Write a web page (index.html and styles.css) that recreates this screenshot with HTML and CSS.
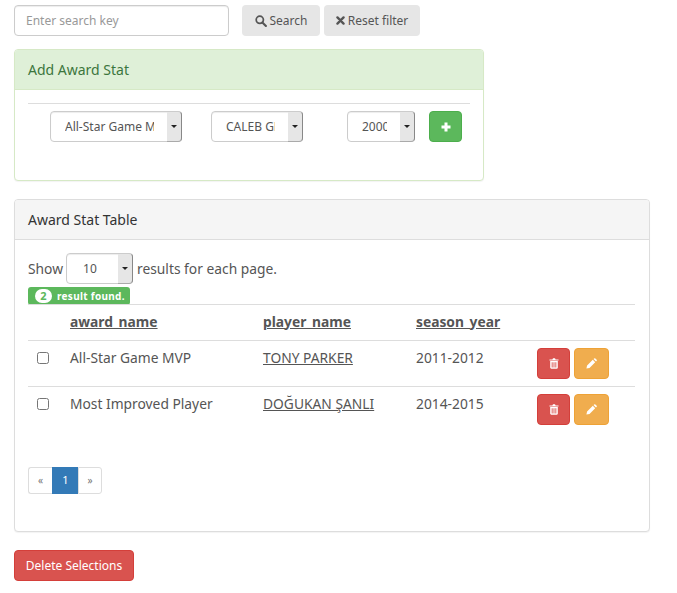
FILE: index.html
```html
<!DOCTYPE html>
<html lang="en">
<head>
<meta charset="utf-8">
<title>Award Stat</title>
<link rel="stylesheet" href="styles.css">
</head>
<body>
<form class="search-row">
  <input class="search-input" type="text" placeholder="Enter search key">
  <button class="btn btn-default search-btn" type="button">
    <svg class="icon" viewBox="0 0 13 13" width="12" height="12"><circle cx="5.2" cy="5.2" r="3.9" fill="none" stroke="currentColor" stroke-width="1.9"/><path d="M8 8l3.800 3.800" stroke="currentColor" stroke-width="2.300" stroke-linecap="round"/></svg><span>Search</span></button>
  <button class="btn btn-default reset-btn" type="button">
    <svg class="icon" viewBox="0 0 10 10" width="9" height="9"><path d="M1.600 1.600l6.800 6.800M8.400 1.600l-6.800 6.800" stroke="currentColor" stroke-width="2.600" stroke-linecap="round"/></svg><span>Reset filter</span></button>
</form>

<section class="panel panel-green">
  <h2 class="panel-heading">Add Award Stat</h2>
  <div class="panel-body add-body">
    <hr class="rule">
    <div class="add-row">
      <div class="select-wrap award-select"><select><option>All-Star Game MVP</option></select><span class="arrow"></span></div>
      <div class="select-wrap player-select"><select><option>CALEB GREEN</option></select><span class="arrow"></span></div>
      <div class="select-wrap year-select"><select><option>2000-2001</option></select><span class="arrow"></span></div>
      <button class="btn btn-success add-btn" type="button" aria-label="Add">
        <svg viewBox="0 0 10 10" width="10" height="10"><path d="M5 .5v9M.5 5h9" stroke="currentColor" stroke-width="3"/></svg>
      </button>
    </div>
  </div>
</section>

<section class="panel panel-gray">
  <h2 class="panel-heading">Award Stat Table</h2>
  <div class="panel-body table-body">
    <div class="show-row">
      <span>Show</span>
      <div class="select-wrap size-select"><select><option>10</option></select><span class="arrow"></span></div>
      <span>results for each page.</span>
    </div>
    <div class="found"><span class="found-count">2</span>result found.</div>
    <table class="stats">
      <thead>
        <tr>
          <th class="col-check"></th>
          <th class="col-award"><a href="#">award_name</a></th>
          <th class="col-player"><a href="#">player_name</a></th>
          <th class="col-season"><a href="#">season_year</a></th>
          <th class="col-actions"></th>
        </tr>
      </thead>
      <tbody>
        <tr>
          <td><input class="check" type="checkbox"></td>
          <td>All-Star Game MVP</td>
          <td><a href="#">TONY PARKER</a></td>
          <td>2011-2012</td>
          <td>
            <div class="actions">
            <button class="btn btn-danger icon-btn" type="button" aria-label="Delete"><svg viewBox="0 0 10 11" width="10" height="11"><path fill-rule="evenodd" d="M3.400 1.400L4 .3h2l.6 1.100H9.500v1.100H.5V1.400zM1.200 3h7.600v6.600c0 .8-.5 1.200-1.100 1.200H2.300c-.6 0-1.100-.4-1.100-1.200zM2.700 4.200v5.400h.9V4.200zM4.550 4.200v5.400h.9V4.200zM6.400 4.200v5.400h.9V4.200z" fill="currentColor"/></svg></button>
            <button class="btn btn-warning icon-btn edit-btn" type="button" aria-label="Edit"><svg viewBox="0 0 11 11" width="11" height="11"><path d="M.4 10.600l.7-3.100 5.700-5.700 2.400 2.400-5.700 5.700zM7.500 1.100l.8-.7c.3-.3.7-.3 1 0l1.400 1.400c.3.3.3.7 0 1l-.7.8z" fill="currentColor"/></svg></button>
            </div>
          </td>
        </tr>
        <tr>
          <td><input class="check" type="checkbox"></td>
          <td>Most Improved Player</td>
          <td><a href="#">DOĞUKAN ŞANLI</a></td>
          <td>2014-2015</td>
          <td>
            <div class="actions">
            <button class="btn btn-danger icon-btn" type="button" aria-label="Delete"><svg viewBox="0 0 10 11" width="10" height="11"><path fill-rule="evenodd" d="M3.400 1.400L4 .3h2l.6 1.100H9.500v1.100H.5V1.400zM1.200 3h7.600v6.600c0 .8-.5 1.200-1.100 1.200H2.300c-.6 0-1.100-.4-1.100-1.200zM2.700 4.200v5.400h.9V4.200zM4.550 4.200v5.400h.9V4.200zM6.400 4.200v5.400h.9V4.200z" fill="currentColor"/></svg></button>
            <button class="btn btn-warning icon-btn edit-btn" type="button" aria-label="Edit"><svg viewBox="0 0 11 11" width="11" height="11"><path d="M.4 10.600l.7-3.100 5.700-5.700 2.400 2.400-5.700 5.700zM7.500 1.100l.8-.7c.3-.3.7-.3 1 0l1.400 1.400c.3.3.3.7 0 1l-.7.8z" fill="currentColor"/></svg></button>
            </div>
          </td>
        </tr>
      </tbody>
    </table>
    <nav class="pagination">
      <a class="page" href="#">«</a><a class="page active" href="#">1</a><a class="page" href="#">»</a>
    </nav>
  </div>
</section>

<button class="btn btn-danger delete-all" type="button">Delete Selections</button>
</body>
</html>
```

FILE: styles.css
```css
* {
  box-sizing: border-box;
}

html,
body {
  margin: 0;
  background: #fff;
}

body {
  padding: 5px 14px 12px;
  font-family: "Noto Sans", "Open Sans", sans-serif;
  font-size: 13px;
  line-height: 20px;
  color: #555;
}

.search-row {
  display: flex;
  height: 31px;
}

.search-input {
  width: 215px;
  height: 31px;
  padding: 0 11px;
  border: 1px solid #ccc;
  border-radius: 4px;
  font: inherit;
  font-size: 12px;
  color: #555;
  box-shadow: inset 0 1px 1px rgba(0, 0, 0, .075);
  outline: none;
}

.search-input::placeholder {
  color: #999;
  opacity: 1;
}

.btn {
  display: inline-flex;
  align-items: center;
  justify-content: center;
  height: 31px;
  padding: 0;
  border: 1px solid transparent;
  border-radius: 4px;
  font: inherit;
  font-size: 12px;
  white-space: nowrap;
  cursor: pointer;
}

.btn-default {
  background: #e6e6e6;
  color: #555;
}

.search-btn {
  width: 78px;
  margin-left: 13px;
}

.reset-btn {
  width: 96px;
  margin-left: 4px;
}

.icon {
  margin-right: 3px;
  flex: none;
}

.panel {
  background: #fff;
  border: 1px solid #ddd;
  border-radius: 4px;
  box-shadow: 0 1px 1px rgba(0, 0, 0, .05);
}

.panel-heading {
  height: 40px;
  margin: 0;
  padding: 9px 13px;
  border-bottom: 1px solid #ddd;
  border-radius: 3px 3px 0 0;
  font-size: 14px;
  font-weight: 400;
  line-height: 21px;
}

.panel-green {
  width: 470px;
  height: 132px;
  margin-top: 13px;
  border-color: #d6e9c6;
}

.panel-green .panel-heading {
  background: #dff0d8;
  border-color: #d6e9c6;
  color: #3c763d;
}

.panel-gray {
  width: 636px;
  height: 333px;
  margin-top: 18px;
}

.panel-gray .panel-heading {
  background: #f5f5f5;
  color: #333;
}

.panel-body {
  padding: 13px 13px 0;
}

.rule {
  height: 1px;
  margin: 0;
  border: 0;
  background: #ddd;
}

.add-row {
  display: flex;
  margin-top: 7px;
  padding-left: 22px;
}

.select-wrap {
  position: relative;
  height: 31px;
  flex: none;
}

.select-wrap select {
  display: block;
  width: 100%;
  height: 31px;
  padding: 0 27px 0 14px;
  border: 1px solid #ccc;
  border-radius: 4px;
  background: #fff;
  font: inherit;
  font-size: 12px;
  color: #555;
  appearance: none;
  -webkit-appearance: none;
  outline: none;
  box-shadow: inset 0 1px 1px rgba(0, 0, 0, .075);
}

.arrow {
  position: absolute;
  top: 0;
  right: 0;
  width: 15px;
  height: 31px;
  background: #e6e6e6;
  border: 1px solid #ccc;
  border-left: 0;
  border-right-color: #888;
  border-bottom-color: #aaa;
  border-radius: 0 4px 4px 0;
}

.arrow::after {
  content: "";
  position: absolute;
  top: 13px;
  left: 4px;
  border: 3px solid transparent;
  border-top-color: #222;
  border-bottom: 0;
}

.award-select {
  width: 132px;
}

.player-select {
  width: 92px;
  margin-left: 29px;
}

.year-select {
  width: 68px;
  margin-left: 44px;
}

.add-btn {
  width: 33px;
  margin-left: 14px;
}

.btn-success {
  background: #5cb85c;
  border-color: #4cae4c;
  color: #fff;
}

.table-body {
  padding-top: 13px;
}

.show-row {
  display: flex;
  align-items: center;
  gap: 4px;
  height: 31px;
  font-size: 13.8px;
}

.size-select {
  width: 67px;
  margin-left: -1px;
}

.size-select select {
  padding-left: 16px;
}

.found {
  display: flex;
  align-items: center;
  width: 102px;
  height: 18px;
  margin-top: 3px;
  padding-left: 7px;
  border-radius: 3px;
  background: #5cb85c;
  color: #fff;
  font-size: 10px;
  font-weight: 700;
  line-height: 18px;
  letter-spacing: .3px;
}

.found-count {
  display: flex;
  align-items: center;
  justify-content: center;
  width: 17px;
  height: 14px;
  margin-right: 5px;
  border-radius: 7px;
  background: #fff;
  color: #5cb85c;
  font-size: 11px;
}

.stats {
  width: 607px;
  margin-top: -1px;
  border-collapse: collapse;
  table-layout: fixed;
  font-size: 13.8px;
}

.stats a {
  color: #555;
  text-decoration: underline;
}

.stats th {
  height: 36px;
  padding: 0 8px 2px;
  border-top: 1px solid #ddd;
  text-align: left;
  font-weight: 700;
}

.stats td {
  height: 46px;
  padding: 7px 8px;
  border-top: 1px solid #ddd;
  vertical-align: top;
}

.col-check {
  width: 34px;
}

.col-award {
  width: 193px;
}

.col-player {
  width: 153px;
}

.col-season {
  width: 121px;
}

.col-actions {
  width: 106px;
}

.check {
  display: block;
  width: 12px;
  height: 12px;
  margin: 4px 0 0 1px;
}

.actions {
  display: flex;
  gap: 4px;
}

.icon-btn {
  width: 33px;
  color: #fff;
}

.edit-btn {
  width: 35px;
}

.btn-danger {
  background: #d9534f;
  border-color: #d43f3a;
  color: #fff;
}

.btn-warning {
  background: #f0ad4e;
  border-color: #eea236;
  color: #fff;
}

.pagination {
  display: flex;
  width: 74px;
  height: 27px;
  margin-top: 34px;
}

.page {
  display: flex;
  flex: none;
  align-items: center;
  justify-content: center;
  width: 24px;
  border: 1px solid #ddd;
  border-right: 0;
  color: #777;
  font-size: 10px;
  text-decoration: none;
}

.page:first-child {
  border-radius: 3px 0 0 3px;
}

.page:last-child {
  border-right: 1px solid #ddd;
  border-radius: 0 3px 3px 0;
}

.page.active {
  width: 26px;
  background: #337ab7;
  border-color: #337ab7;
  color: #fff;
  font-size: 11px;
}

.delete-all {
  width: 120px;
  margin-top: 18px;
}
```
